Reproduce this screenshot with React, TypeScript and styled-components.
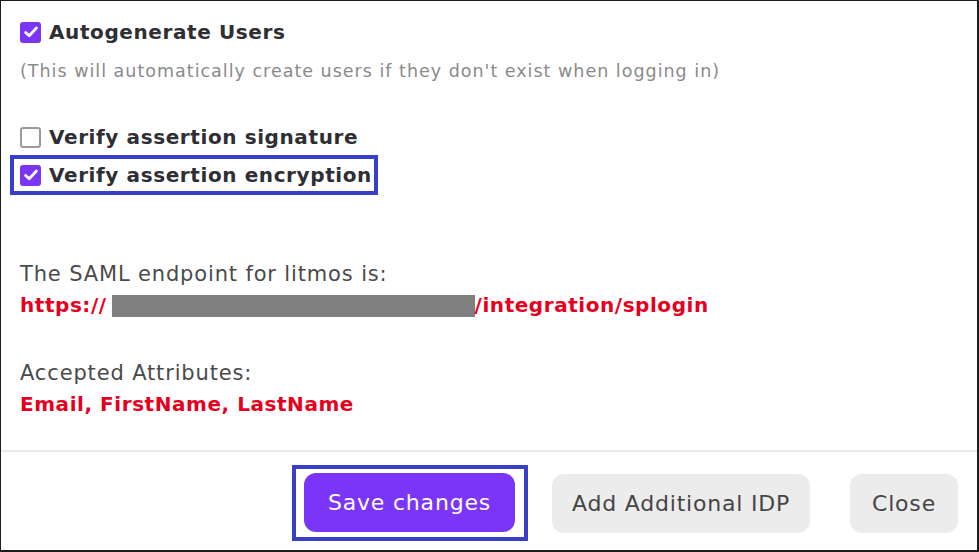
import React from "react";
import styled, { createGlobalStyle } from "styled-components";

const FONT = `"DejaVu Sans", "Noto Sans", sans-serif`;

const Global = createGlobalStyle`
  html, body { margin: 0; padding: 0; background: #ffffff; }
  body { font-family: ${FONT}; }
  * { box-sizing: border-box; }
`;

const Frame = styled.div`
  width: 979px;
  height: 552px;
  border: 2px solid #1c1c1c;
  border-left-width: 1px;
  border-top-width: 1px;
  display: flex;
  flex-direction: column;
  background: #fff;
`;

const Content = styled.div`
  flex: 1;
  display: flex;
  flex-direction: column;
  align-items: flex-start;
  padding: 19px 0 0 19px;
`;

const CheckRow = styled.label<{ $mt?: number }>`
  display: flex;
  align-items: center;
  gap: 8px;
  height: 22px;
  margin-top: ${(p) => p.$mt ?? 0}px;
  font-size: 20px;
  font-weight: 700;
  letter-spacing: 0.6px;
  color: #2e2e33;
`;

const Box = styled.span<{ $checked?: boolean }>`
  width: 21px;
  height: 21px;
  border-radius: 3px;
  flex: none;
  display: flex;
  align-items: center;
  justify-content: center;
  background: ${(p) => (p.$checked ? "#7b35f4" : "#ffffff")};
  border: ${(p) => (p.$checked ? "none" : "2px solid #9a9a9a")};
`;

const Highlight = styled.div<{ $mt?: number }>`
  margin-top: ${(p) => p.$mt ?? 0}px;
  margin-left: -10px;
  border: 4px solid #3a3fc8;
  padding: 5px 2px 5px 6px;
`;

const Note = styled.div`
  margin-top: 17px;
  font-size: 17.5px;
  line-height: 22px;
  letter-spacing: 1px;
  color: #8a8a8a;
`;

const Label = styled.div<{ $mt?: number }>`
  margin-top: ${(p) => p.$mt ?? 0}px;
  font-size: 21px;
  line-height: 31px;
  letter-spacing: 0.85px;
  color: #4a4a4a;
`;

const RedLine = styled.div`
  display: flex;
  align-items: center;
  font-size: 20px;
  line-height: 31px;
  font-weight: 700;
  letter-spacing: 0.55px;
  color: #e6001e;
`;

const Redacted = styled.span`
  display: inline-block;
  width: 363px;
  height: 22px;
  background: #808080;
  margin-left: 5px;
`;

const Divider = styled.div`
  height: 2px;
  background: #e9e9e9;
`;

const Footer = styled.div`
  display: flex;
  align-items: center;
  justify-content: flex-end;
  padding: 13px 19px 9px 0;
`;

const Focus = styled.div`
  border: 4px solid #3a3fc8;
  padding: 4px 9px 5px 8px;
`;

const Button = styled.button<{ $primary?: boolean; $w: number; $ml?: number }>`
  width: ${(p) => p.$w}px;
  height: 59px;
  margin-left: ${(p) => p.$ml ?? 0}px;
  border: none;
  border-radius: 12px;
  font-family: ${FONT};
  font-size: 22px;
  letter-spacing: 0.8px;
  font-weight: 400;
  color: ${(p) => (p.$primary ? "#ffffff" : "#454545")};
  background: ${(p) => (p.$primary ? "#7b35f8" : "#ececec")};
  display: flex;
  align-items: center;
  justify-content: center;
  cursor: pointer;
`;

const Check = ({ checked }: { checked?: boolean }) => (
  <Box $checked={checked}>
    {checked && (
      <svg width="16" height="16" viewBox="0 0 16 16">
        <path d="M2.6 8.4 L6.2 11.8 L13.4 4" fill="none" stroke="#fff" strokeWidth="2.8" strokeLinecap="round" strokeLinejoin="round" />
      </svg>
    )}
  </Box>
);

export default function App() {
  return (
    <>
      <Global />
      <Frame>
        <Content>
          <CheckRow $mt={1}>
            <Check checked />
            Autogenerate Users
          </CheckRow>
          <Note>(This will automatically create users if they don't exist when logging in)</Note>
          <CheckRow $mt={44}>
            <Check />
            Verify assertion signature
          </CheckRow>
          <Highlight $mt={7}>
            <CheckRow>
              <Check checked />
              Verify assertion encryption
            </CheckRow>
          </Highlight>
          <Label $mt={64}>The SAML endpoint for litmos is:</Label>
          <RedLine>
            https://
            <Redacted />
            /integration/splogin
          </RedLine>
          <Label $mt={37}>Accepted Attributes:</Label>
          <RedLine>Email, FirstName, LastName</RedLine>
        </Content>
        <Divider />
        <Footer>
          <Focus>
            <Button $primary $w={211}>Save changes</Button>
          </Focus>
          <Button $w={258} $ml={24}>Add Additional IDP</Button>
          <Button $w={108} $ml={40}>Close</Button>
        </Footer>
      </Frame>
    </>
  );
}
